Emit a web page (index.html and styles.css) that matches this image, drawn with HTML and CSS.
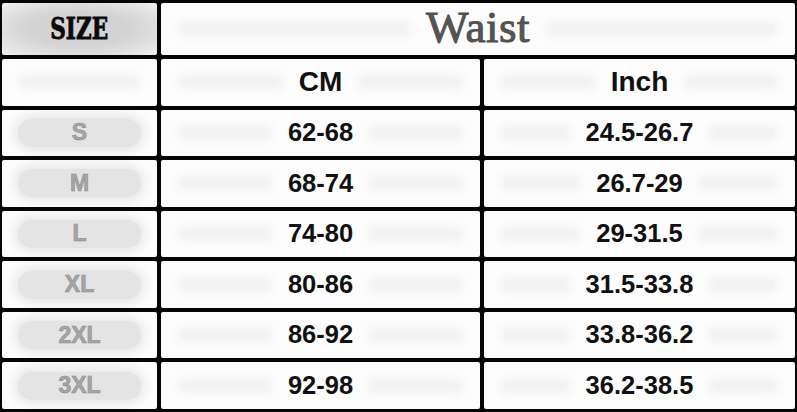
FILE: index.html
```html
<!DOCTYPE html>
<html>
<head>
<meta charset="utf-8">
<link rel="stylesheet" href="styles.css">
</head>
<body>
<div class="chart">
  <div class="cell size-head"><span class="size-word">SIZE</span></div>
  <div class="cell data waist-cell"><span class="band"></span><span class="txt waist">Waist</span></div>

  <div class="cell data"><span class="band"></span></div>
  <div class="cell data"><span class="band"></span><span class="txt head">CM</span></div>
  <div class="cell data"><span class="band"></span><span class="txt head">Inch</span></div>

  <div class="cell label"><span class="band"></span><span class="lbl">S</span></div>
  <div class="cell data"><span class="band"></span><span class="txt">62-68</span></div>
  <div class="cell data"><span class="band"></span><span class="txt">24.5-26.7</span></div>

  <div class="cell label"><span class="band"></span><span class="lbl">M</span></div>
  <div class="cell data"><span class="band"></span><span class="txt">68-74</span></div>
  <div class="cell data"><span class="band"></span><span class="txt">26.7-29</span></div>

  <div class="cell label"><span class="band"></span><span class="lbl">L</span></div>
  <div class="cell data"><span class="band"></span><span class="txt">74-80</span></div>
  <div class="cell data"><span class="band"></span><span class="txt">29-31.5</span></div>

  <div class="cell label"><span class="band"></span><span class="lbl">XL</span></div>
  <div class="cell data"><span class="band"></span><span class="txt">80-86</span></div>
  <div class="cell data"><span class="band"></span><span class="txt">31.5-33.8</span></div>

  <div class="cell label"><span class="band"></span><span class="lbl">2XL</span></div>
  <div class="cell data"><span class="band"></span><span class="txt">86-92</span></div>
  <div class="cell data"><span class="band"></span><span class="txt">33.8-36.2</span></div>

  <div class="cell label"><span class="band"></span><span class="lbl">3XL</span></div>
  <div class="cell data"><span class="band"></span><span class="txt">92-98</span></div>
  <div class="cell data"><span class="band"></span><span class="txt">36.2-38.5</span></div>
</div>
</body>
</html>
```

FILE: styles.css
```css
html, body {
  margin: 0;
  padding: 0;
  background: #ffffff;
}

.chart {
  width: 797px;
  height: 412px;
  box-sizing: border-box;
  background: #050505;
  padding: 3px 2px 3px 2px;
  display: grid;
  grid-template-columns: 155px 319px 311px;
  grid-template-rows: 52px repeat(7, 1fr);
  column-gap: 4px;
  row-gap: 4px;
}

.cell {
  background: #fcfcfc;
  display: grid;
  place-items: center;
  border-radius: 2px;
  overflow: hidden;
  font-family: "Liberation Sans", Arial, sans-serif;
}

.cell > * {
  grid-area: 1 / 1;
}

.waist-cell {
  grid-column: span 2;
}

.data .band {
  width: calc(100% - 40px);
  height: 8px;
  background: #f3f3f3;
  box-shadow: 0 0 8px 4px #f3f3f3;
  border-radius: 6px;
}

.txt {
  background: #fcfcfc;
  box-shadow: 0 0 8px 12px #fcfcfc;
  font-weight: bold;
  font-size: 25.5px;
  color: #111111;
  line-height: 1;
  padding: 0 4px;
}

.txt.head {
  font-size: 28px;
}

.txt.waist {
  font-family: "Liberation Serif", "Times New Roman", serif;
  font-weight: normal;
  font-size: 45px;
  color: #555555;
  letter-spacing: 0.5px;
  -webkit-text-stroke: 1px #505050;
  margin-top: -3px;
}

.label .band {
  width: calc(100% - 32px);
  height: 28px;
  background: #e4e4e4;
  box-shadow: 0 0 12px 3px #e4e4e4;
  border-radius: 14px;
}

.lbl {
  font-weight: bold;
  font-size: 23px;
  line-height: 1;
  color: #a6a6a6;
  -webkit-text-stroke: 0.6px #8e8e8e;
}

.size-head {
  background: radial-gradient(ellipse at center, #d3d3d3 45%, #e4e4e4 80%, #f0f0f0 100%);
}

.size-word {
  font-family: "DejaVu Serif", "Liberation Serif", serif;
  font-weight: bold;
  font-stretch: condensed;
  font-size: 30px;
  color: #0a0a0a;
  line-height: 1;
  display: inline-block;
  transform: scaleX(0.8);
  -webkit-text-stroke: 0.8px #0a0a0a;
}
```
